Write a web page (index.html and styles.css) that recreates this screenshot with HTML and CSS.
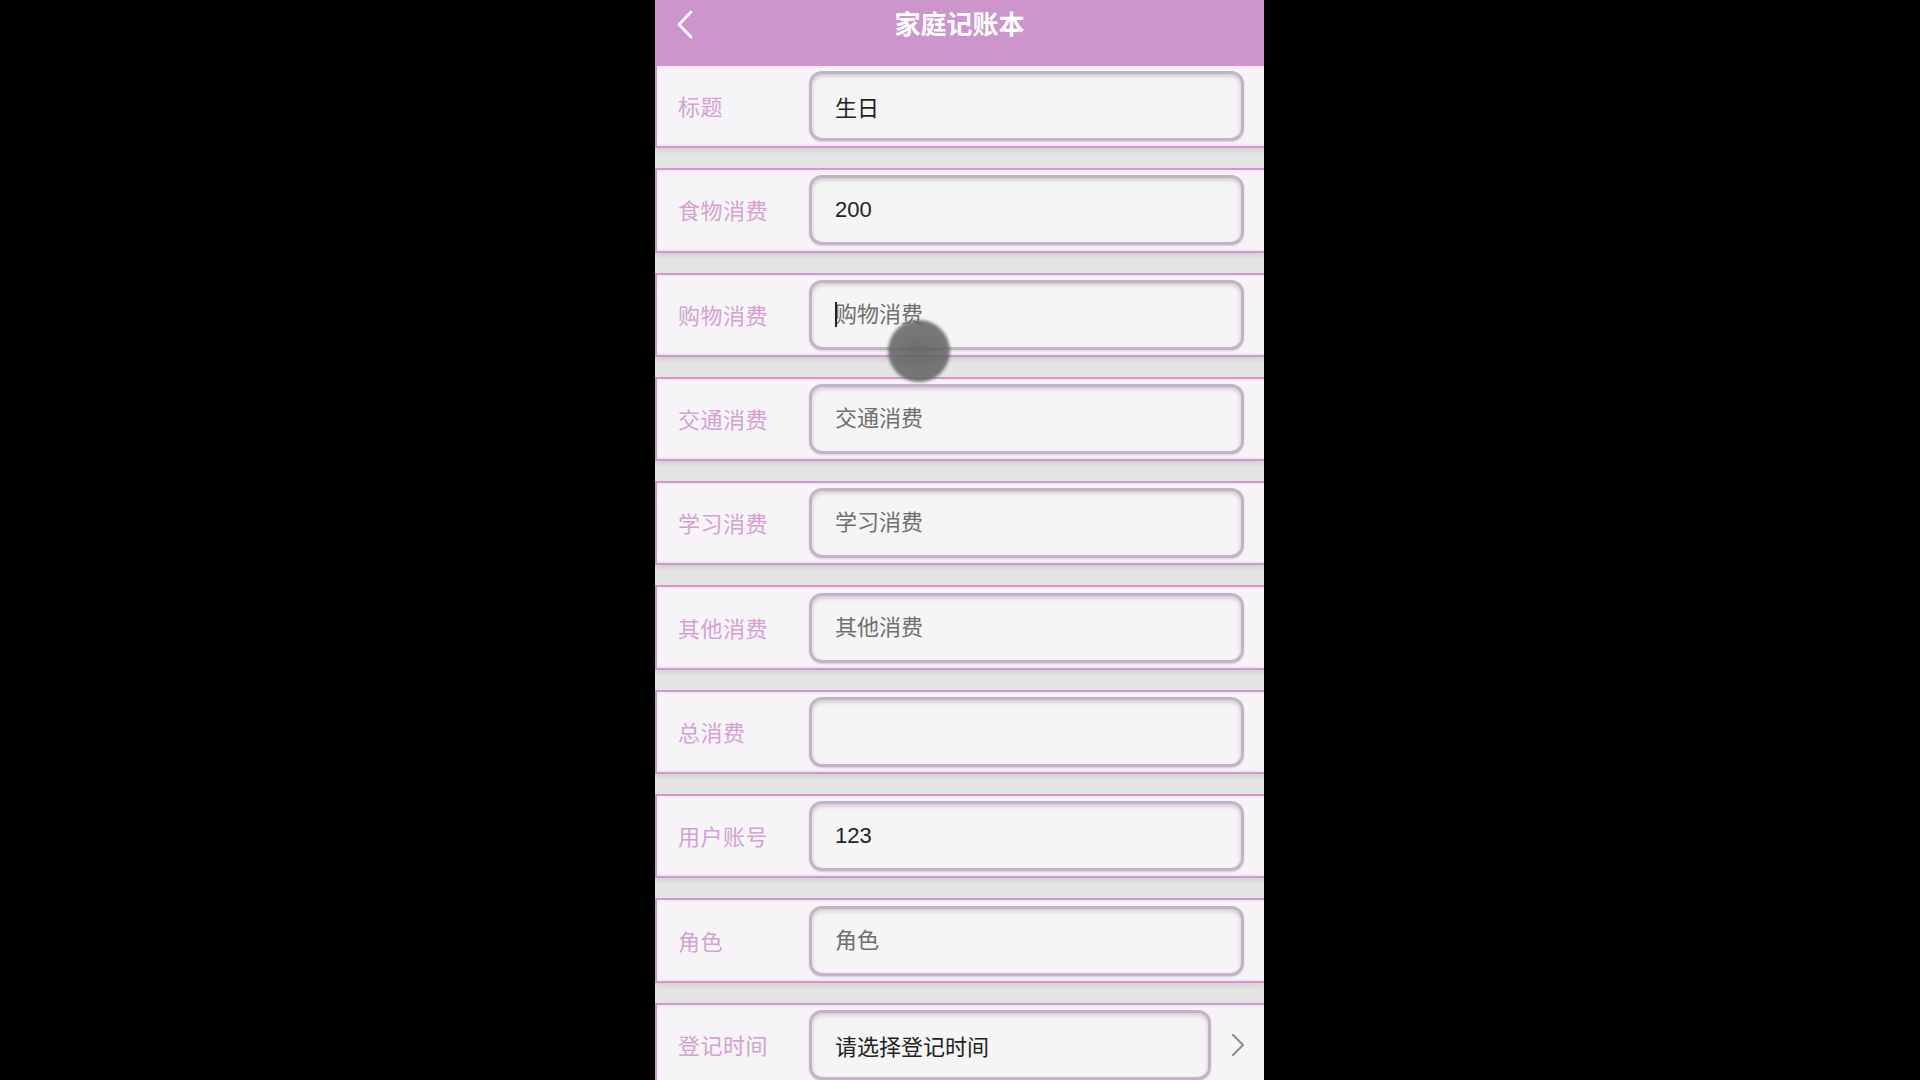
FILE: index.html
```html
<!DOCTYPE html>
<html lang="zh-CN">
<head>
  <meta charset="UTF-8">
  <meta name="viewport" content="width=device-width, initial-scale=1.0">
  <title>家庭记账本</title>
  <link rel="stylesheet" href="styles.css">
</head>
<body>
  <div class="phone">
    <div class="bar">
      <a class="back" href="#">
        <svg width="18" height="29" viewBox="0 0 18 29"><polyline points="15,2 3,14.5 15,27" fill="none" stroke="#fff" stroke-width="2.6" stroke-linecap="round" stroke-linejoin="round"/></svg>
      </a>
      <h1 class="title">家庭记账本</h1>
    </div>

    <form class="form">
      <div class="row">
        <label class="label">标题</label>
        <input class="field" type="text" value="生日" placeholder="标题">
      </div>
      <div class="row">
        <label class="label">食物消费</label>
        <input class="field" type="text" value="200" placeholder="食物消费">
      </div>
      <div class="row">
        <label class="label">购物消费</label>
        <div class="field-wrap">
          <input class="field" type="text" placeholder="购物消费">
          <span class="caret"></span> <!-- text cursor of the focused field -->
        </div>
      </div>
      <div class="row">
        <label class="label">交通消费</label>
        <input class="field" type="text" placeholder="交通消费">
      </div>
      <div class="row">
        <label class="label">学习消费</label>
        <input class="field" type="text" placeholder="学习消费">
      </div>
      <div class="row">
        <label class="label">其他消费</label>
        <input class="field" type="text" placeholder="其他消费">
      </div>
      <div class="row">
        <label class="label">总消费</label>
        <input class="field" type="text">
      </div>
      <div class="row">
        <label class="label">用户账号</label>
        <input class="field" type="text" value="123" placeholder="用户账号">
      </div>
      <div class="row">
        <label class="label">角色</label>
        <input class="field" type="text" placeholder="角色">
      </div>
      <div class="row">
        <label class="label">登记时间</label>
        <div class="field picker">请选择登记时间</div>
        <svg class="arrow" width="14" height="24" viewBox="0 0 14 24"><polyline points="2,2 12,12 2,22" fill="none" stroke="#8c8c8c" stroke-width="2" stroke-linecap="round" stroke-linejoin="round"/></svg>
      </div>
    </form>

    <div class="touch"></div> <!-- touch indicator from the recording -->
  </div>
</body>
</html>
```

FILE: styles.css
```css
body {
  margin: 0;
  padding: 0;
  background-color: #000;
  font-family: "Liberation Sans", "Noto Sans CJK SC", sans-serif;
  display: flex;
  justify-content: center;
  height: 100vh;
  overflow: hidden;
}

.phone {
  position: relative;
  width: 609px;
  height: 1080px;
  background-color: #e4e4e4;
  overflow: hidden;
  margin-left: -1px;
}

.bar {
  height: 64px;
  background-color: #cc96cc;
  display: flex;
  justify-content: center;
  position: relative;
}

.back {
  position: absolute;
  left: 21px;
  top: 10px;
  display: block;
}

.title {
  margin: 0;
  font-size: 26px;
  font-weight: bold;
  color: #fff;
  line-height: 50px;
}

.form {
  display: flex;
  flex-direction: column;
  gap: 20px;
}

.row {
  box-sizing: border-box;
  height: 84.3px;
  display: flex;
  align-items: center;
  background-color: #f6f4f6;
  border: 2px solid #cc9acc;
  border-right: none;
  box-shadow: inset 0 2px 1px #f8e6f8, inset 0 -2px 1px #f8e6f8, 0 3px 5px rgba(0, 0, 0, 0.08);
}

.row:first-child {
  border-top-color: #cc96cc;
}

.label {
  width: 131px;
  flex-shrink: 0;
  padding: 0 0 2px 21px;
  font-size: 22px;
  letter-spacing: 0.5px;
  color: #d3a2d3;
}

.field-wrap {
  position: relative;
  display: flex;
}

.field {
  box-sizing: border-box;
  width: 435px;
  height: 70px;
  padding: 0 0 0 23px;
  border: 3px solid #c6b2c6;
  border-radius: 13px;
  background-color: #f5f5f5;
  box-shadow: inset 0 2px 4px rgba(0, 0, 0, 0.18), 0 1px 2px rgba(0, 0, 0, 0.15);
  font-family: "Liberation Sans", "Noto Sans CJK SC", sans-serif;
  font-size: 22px;
  color: #222;
  outline: none;
}

.field::placeholder {
  color: #6f6f6f;
}

.caret {
  position: absolute;
  left: 26px;
  top: 22px;
  width: 2px;
  height: 25px;
  background-color: #222;
}

.picker {
  width: 402px;
  display: flex;
  align-items: center;
}

.arrow {
  margin-left: 20px;
}

.touch {
  position: absolute;
  left: 233px;
  top: 320px;
  width: 62px;
  height: 62px;
  border-radius: 50%;
  filter: blur(1.5px);
  background: radial-gradient(circle, rgba(95, 95, 95, 0.9) 0%, rgba(100, 100, 100, 0.85) 72%, rgba(130, 130, 130, 0.35) 86%, rgba(130, 130, 130, 0) 100%);
}
```
